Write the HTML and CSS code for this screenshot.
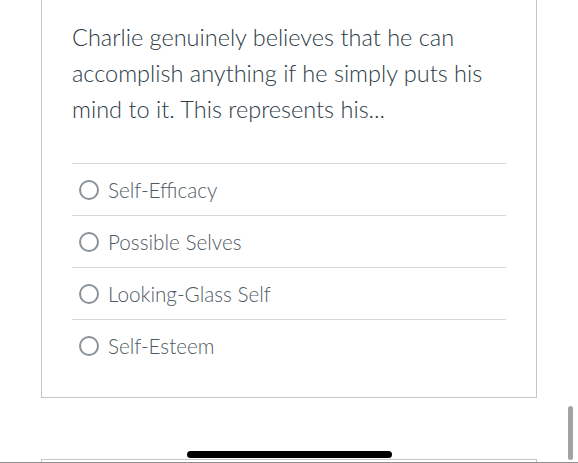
FILE: index.html
```html
<!DOCTYPE html>
<html lang="en">
<head>
  <meta charset="UTF-8">
  <meta name="viewport" content="width=device-width, initial-scale=1.0">
  <title>Quiz question</title>
  <link rel="stylesheet" href="styles.css">
</head>
<body>
  <div class="question-card">
    <p class="question-text">Charlie genuinely believes that he can accomplish anything if he simply puts his mind to it. This represents his...</p>
    <ul class="answers">
      <li class="answer"><span class="radio"></span><span class="answer-label">Self-Efficacy</span></li>
      <li class="answer"><span class="radio"></span><span class="answer-label">Possible Selves</span></li>
      <li class="answer"><span class="radio"></span><span class="answer-label">Looking-Glass Self</span></li>
      <li class="answer"><span class="radio"></span><span class="answer-label">Self-Esteem</span></li>
    </ul>
  </div>
  <div class="question-card next-card"></div>

  <div class="scrollbar"></div>
  <div class="bottom-bar"></div>
  <div class="home-indicator"></div>
</body>
</html>
```

FILE: styles.css
```css
body {
  font-family: Lato, "Open Sans", sans-serif;
  font-weight: 300;
  margin: 0;
  padding: 0;
  background-color: #fff;
  color: #2d3b45;
}

.question-card {
  margin: 0 41px;
  border: 1px solid #c4c7c9;
  border-top: none;
  padding: 19px 30px 26px;
}

.question-text {
  margin: 0 0 36px;
  font-size: 23.5px;
  line-height: 36px;
  color: #2d3b45;
}

.answers {
  list-style: none;
  margin: 0;
  padding: 0;
  border-top: 1px solid #d5d9dc;
}

.answer {
  display: flex;
  align-items: center;
  gap: 9px;
  min-height: 51px;
  padding-left: 7px;
  border-bottom: 1px solid #d5d9dc;
}

.answer:last-child {
  border-bottom: none;
}

.radio {
  width: 16px;
  height: 16px;
  border: 2px solid #8a9299;
  border-radius: 50%;
  flex-shrink: 0;
}

.answer-label {
  font-size: 20.7px;
  color: #4f5b64;
}

.next-card {
  margin-top: 61px;
  border-top: 1px solid #c4c7c9;
  height: 2px;
  padding: 0;
}

.scrollbar {
  position: fixed;
  right: 5px;
  top: 406px;
  width: 5px;
  height: 54px;
  border-radius: 3px;
  background-color: #a3a3a3;
}

.bottom-bar {
  position: fixed;
  left: 0;
  right: 0;
  bottom: 0;
  height: 1px;
  background-color: #8f8f8f;
}

.home-indicator {
  position: fixed;
  left: 187px;
  top: 451px;
  width: 205px;
  height: 7px;
  border-radius: 4px;
  background-color: #000;
}
```
